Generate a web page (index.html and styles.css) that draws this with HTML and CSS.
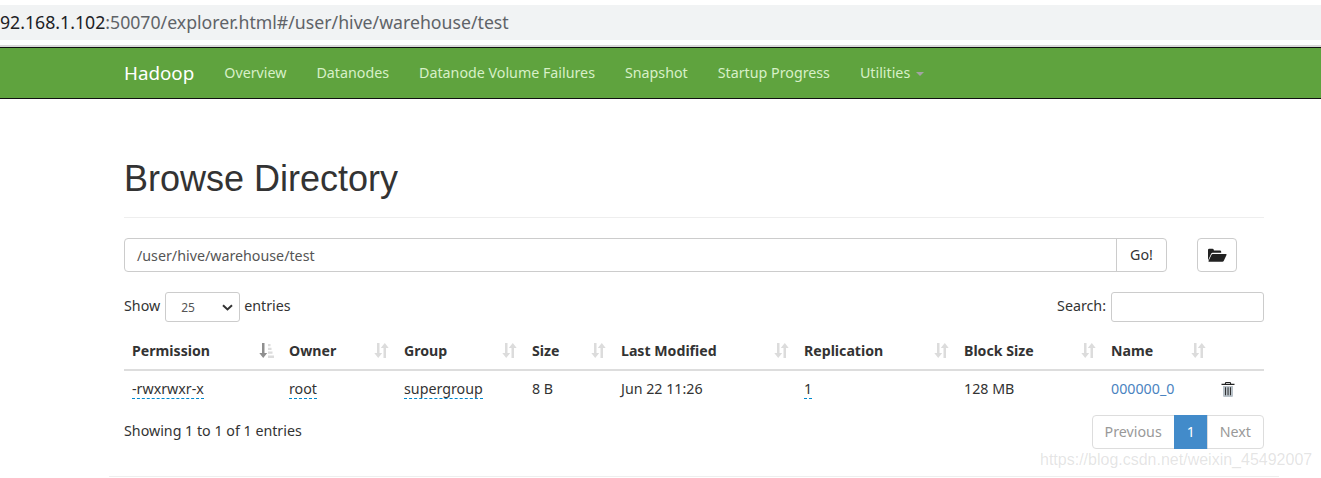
FILE: index.html
```html
<!DOCTYPE html>
<html lang="en">
<head>
<meta charset="utf-8">
<title>Browsing HDFS</title>
<link rel="stylesheet" href="styles.css">
</head>
<body>
<div class="addressbar"><span class="host">92.168.1.102</span>:50070/explorer.html#/user/hive/warehouse/test</div>
<nav class="navbar">
  <a class="brand">Hadoop</a>
  <a class="navlink">Overview</a>
  <a class="navlink">Datanodes</a>
  <a class="navlink">Datanode Volume Failures</a>
  <a class="navlink">Snapshot</a>
  <a class="navlink">Startup Progress</a>
  <a class="navlink">Utilities <span class="caret"></span></a>
</nav>
<main class="container">
  <h1 class="title">Browse Directory</h1>
  <div class="pathrow">
    <div class="inputgroup">
      <div class="pathinput">/user/hive/warehouse/test</div>
      <div class="gobtn">Go!</div>
    </div>
    <div class="folderbtn">
      <svg class="foldericon" width="19" height="14" viewBox="0 0 19 14"><path class="ink" d="M0 12.5V2q0-1.3 1.3-1.3h3.2q1.1 0 1.3 1.2l.1.5h6q1.3 0 1.3 1.3v1.1H4.6q-1 0-1.5 1z"/><path class="ink" d="M4.6 6h13.2q1.2 0 .7 1.1l-2.7 5.7q-.4.9-1.4.9H1q-.9 0-.5-.8l2.900-6q.4-.9 1.200-.9z"/></svg>
    </div>
  </div>
  <div class="controls">
    <div class="lengthctl"><span class="lift showlabel">Show</span>
      <div class="select"><span>25</span><svg width="11" height="7" viewBox="0 0 11 7"><path class="chev" d="M1 1.200 5.500 5.400 10 1.200"/></svg></div>
      <span class="lift">entries</span></div>
    <div class="searchctl"><span class="lift">Search:</span> <div class="searchbox"></div></div>
  </div>
  <table class="grid">
    <colgroup>
      <col class="c1"><col class="c2"><col class="c3"><col class="c4"><col class="c5"><col class="c6"><col class="c7"><col class="c8"><col class="c9">
    </colgroup>
    <thead>
      <tr>
        <th class="sorted">Permission<svg class="sort" width="15" height="15" viewBox="0 0 15 15"><path class="dark" d="M3 0h2.500v10H8.200L4.200 15 .3 10H3z"/><path class="light" d="M9 1h2.500v2.200H9zM9 4.800h3.500V7H9zM9 8.600h4.500v2.200H9zM9 12.400h6V15H9z"/></svg></th>
        <th>Owner<svg class="sort" width="15" height="15" viewBox="0 0 15 15"><use href="#updown"/></svg></th>
        <th>Group<svg class="sort" width="15" height="15" viewBox="0 0 15 15"><use href="#updown"/></svg></th>
        <th>Size<svg class="sort" width="15" height="15" viewBox="0 0 15 15"><use href="#updown"/></svg></th>
        <th>Last Modified<svg class="sort" width="15" height="15" viewBox="0 0 15 15"><use href="#updown"/></svg></th>
        <th>Replication<svg class="sort" width="15" height="15" viewBox="0 0 15 15"><use href="#updown"/></svg></th>
        <th>Block Size<svg class="sort" width="15" height="15" viewBox="0 0 15 15"><use href="#updown"/></svg></th>
        <th>Name<svg class="sort" width="15" height="15" viewBox="0 0 15 15"><use href="#updown"/></svg></th>
        <th></th>
      </tr>
    </thead>
    <tbody>
      <tr>
        <td><span class="dotted">-rwxrwxr-x</span></td>
        <td><span class="dotted">root</span></td>
        <td><span class="dotted">supergroup</span></td>
        <td>8 B</td>
        <td>Jun 22 11:26</td>
        <td><span class="dotted">1</span></td>
        <td>128 MB</td>
        <td><a class="link">000000_0</a></td>
        <td><svg class="trash" width="14" height="15" viewBox="0 0 14 15"><path class="ink" d="M5 0h4q.8 0 1 .8l.2 1H13.500v1.100H.5V1.800H3.800l.2-1Q4.200 0 5 0zm.1 1-.2.800h4.200L8.900 1z"/><path class="bin" d="M2 4h10v9.800q0 1.200-1.200 1.200H3.200Q2 15 2 13.800z"/><path class="ink" d="M4 5.200h.9v8H4zM6.600 5.200h.9v8h-.9zM9.100 5.200h.9v8h-.9z"/></svg></td>
      </tr>
    </tbody>
  </table>
  <div class="footerrow">
    <div class="info">Showing 1 to 1 of 1 entries</div>
    <div class="pager"><span class="pg first">Previous</span><span class="pg active">1</span><span class="pg last">Next</span></div>
  </div>
</main>
<hr class="rule">
<div class="watermark">https://blog.csdn.net/weixin_45492007</div>
<svg class="defs" width="0" height="0"><defs><g id="updown"><path class="light" d="M3 0h2.500v10H8.200L4.200 15 .3 10H3zM9.500 15H12V5h2.700L10.800 0 6.800 5H9.500z"/></g></defs></svg>
</body>
</html>
```
FILE: styles.css
```css
* { box-sizing: border-box; }
html, body { margin: 0; padding: 0; height: 478px; overflow: hidden; background: #fff; }
body { position: relative; font: 14.250px/20px "Noto Sans", "Open Sans", sans-serif; color: #333; padding-top: 5px; }
.addressbar { height: 35px; background: #f1f3f4; overflow: hidden; white-space: nowrap; font-size: 17.700px; line-height: 35px; color: #5f6368; }
.host { color: #202124; }
.navbar { margin-top: 5px; height: 54px; border-top: 2px solid #d9d9d9; display: flex; align-items: center; padding-left: 109px; background: #5fa33e; background-clip: padding-box; position: relative; border-bottom: 1px solid #111; }
.navbar::before { content: ""; position: absolute; left: 0; right: 0; top: 0; height: 1px; background: #111; }
.brand { color: #fff; font-size: 18.800px; padding: 0 15px; }
.navlink { color: #d8f0c8; padding: 0 15px; white-space: nowrap; }
.caret { display: inline-block; margin-left: 2px; vertical-align: middle; border-top: 4px solid #a3a3a3; border-left: 4px solid transparent; border-right: 4px solid transparent; }
.container { width: 1170px; margin: 0 0 0 109px; padding: 0 15px; }
.title { margin: 56px 0 0; padding-bottom: 18px; border-bottom: 1px solid #eee; font: 500 36px/48px "Liberation Sans", sans-serif; color: #333; height: 63px; }
.pathrow { display: flex; margin-top: 20px; }
.inputgroup { display: flex; width: 1043px; height: 34px; border: 1px solid #ccc; border-radius: 4px; }
.pathinput { flex: 1; padding: 7px 12px 5px; color: #555; }
.gobtn { width: 50px; border-left: 1px solid #ccc; text-align: center; line-height: 32px; }
.folderbtn { width: 40px; height: 34px; margin-left: 30px; border: 1px solid #ccc; border-radius: 4px; display: flex; align-items: center; justify-content: center; }
.foldericon { margin-left: 1px; }
.ink { fill: #222; }
.bin { fill: #b9c2c9; }
.controls { display: flex; justify-content: space-between; align-items: center; margin-top: 20px; height: 30px; }
.lift { padding-bottom: 2px; }
.showlabel { margin-right: 1px; }
.lengthctl { display: flex; align-items: center; gap: 4px; }
.select { width: 75px; height: 30px; border: 1px solid #ccc; border-radius: 3px; display: flex; align-items: center; justify-content: space-between; padding: 1px 6px 0 15px; font-size: 12px; color: #555; }
.chev { fill: none; stroke: #333; stroke-width: 2; }
.searchctl { display: flex; align-items: center; gap: 5px; }
.searchbox { width: 153px; height: 30px; border: 1px solid #ccc; border-radius: 3px; }
.grid { border-collapse: collapse; table-layout: fixed; width: 1140px; margin-top: 9px; }
.c1 { width: 157px; } .c2 { width: 115px; } .c3 { width: 128px; } .c4 { width: 89px; } .c5 { width: 183px; } .c6 { width: 160px; } .c7 { width: 147px; } .c8 { width: 110px; } .c9 { width: 51px; }
.grid th { position: relative; height: 39px; padding: 2px 8px 0; text-align: left; font-weight: 700; font-size: 14.150px; border-bottom: 2px solid #ddd; white-space: nowrap; }
.grid td { height: 37px; padding: 0 8px; }
.sort { position: absolute; right: 7px; top: 12px; }
.light { fill: #dcdcdc; }
.dark { fill: #8f8f8f; }
.dotted { border-bottom: 1px dashed #0088cc; display: inline-block; line-height: 18px; }
.link { color: #4a83c0; }
.trash { display: block; }
.footerrow { display: flex; justify-content: space-between; margin-top: 8px; }
.info { padding-top: 6px; }
.pager { display: flex; height: 34px; }
.pg { padding: 6px 12px; border: 1px solid #ddd; margin-left: -1px; color: #999; }
.first { border-radius: 4px 0 0 4px; }
.last { border-radius: 0 4px 4px 0; }
.active { width: 34px; text-align: center; background: #428bca; border-color: #428bca; color: #fff; }
.rule { position: absolute; left: 109px; top: 476px; width: 1170px; margin: 0; border: 0; border-top: 1px solid #eee; }
.watermark { position: absolute; left: 1040px; top: 450px; font: 16px/20px "Liberation Sans", sans-serif; color: rgba(120,120,120,0.2); white-space: nowrap; }
.defs { position: absolute; }
```
